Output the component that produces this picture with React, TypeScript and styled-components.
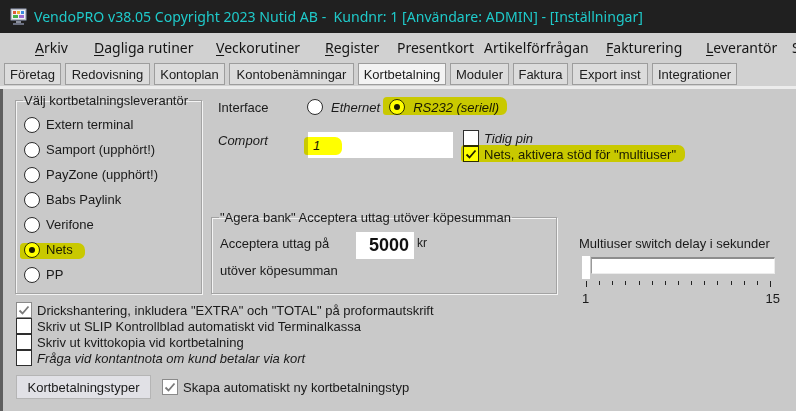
import React from 'react';
import styled, { createGlobalStyle } from 'styled-components';

const GlobalStyle = createGlobalStyle`
  html, body {
    margin: 0;
    padding: 0;
    background: #c9c9c9;
  }
  body {
    width: 796px;
    height: 411px;
    overflow: hidden;
    font-family: "Liberation Sans", Arial, sans-serif;
    font-size: 13px;
    color: #1a1a1a;
  }
`;

const HILITE = '#ffff00';

const Window = styled.div`
  width: 796px;
  height: 411px;
  display: flex;
  flex-direction: column;
  overflow: hidden;
  background: #c9c9c9;
`;

const TitleBar = styled.div`
  flex: none;
  height: 33px;
  background: #202020;
  display: flex;
  align-items: center;
  padding-left: 10px;
  gap: 7px;
  white-space: nowrap;
`;

const TitleText = styled.span`
  font-family: "Noto Sans", "Open Sans", sans-serif;
  font-size: 14.1px;
  color: #1fcaca;
`;

const MenuBar = styled.div`
  flex: none;
  height: 29px;
  background: #d1d1d1;
  display: flex;
  align-items: center;
  padding-left: 35px;
  white-space: nowrap;
  overflow: hidden;
`;

const MenuItem = styled.div<{ $w: number }>`
  flex: none;
  width: ${p => p.$w}px;
  font-family: "Noto Sans", "Open Sans", sans-serif;
  font-size: 14px;
  color: #151515;

  u {
    text-decoration: underline;
    text-underline-offset: 2px;
  }
`;

const TabStrip = styled.div`
  flex: none;
  height: 24px;
  box-sizing: border-box;
  padding: 1px 0 0 4px;
  display: flex;
  gap: 4px;
  background: #d1d1d1;
`;

const Tab = styled.div<{ $w: number; $active?: boolean }>`
  flex: none;
  width: ${p => p.$w}px;
  height: 22px;
  box-sizing: border-box;
  border: 1px solid #9d9d9d;
  background: ${p => (p.$active ? '#f3f3f3' : '#dcdcdc')};
  display: flex;
  align-items: center;
  justify-content: center;
  font-size: 13px;
  color: #202020;
  white-space: nowrap;
`;

const TabRule = styled.div`
  flex: none;
  height: 3px;
  background: #ececec;
`;

const Content = styled.div`
  flex: 1;
  border-left: 3px solid #5e5e5e;
  padding: 4px 0 0 12px;
  display: flex;
  flex-direction: column;
`;

const TopSection = styled.div`
  display: flex;
  height: 201px;
`;

const GroupBox = styled.fieldset<{ $w: number; $h: number }>`
  margin: 0;
  width: ${p => p.$w}px;
  height: ${p => p.$h}px;
  box-sizing: border-box;
  border: 1px solid #a3a3a3;
  box-shadow: inset 1px 1px 0 #f4f4f4, 1px 1px 0 #f4f4f4;
  padding: 0 6px 0 8px;
  min-inline-size: 0;
`;

const Legend = styled.legend`
  padding: 0 1px;
  margin-left: -1px;
  font-size: 13px;
  line-height: 15px;
  color: #1a1a1a;
  white-space: nowrap;
`;

const RadioList = styled.div`
  display: flex;
  flex-direction: column;
  padding-top: 4px;
`;

const RadioRow = styled.label`
  position: relative;
  height: 25px;
  display: flex;
  align-items: center;
  gap: 6px;
  white-space: nowrap;
`;

const RadioCircle = styled.span<{ $on?: boolean }>`
  flex: none;
  width: 16px;
  height: 16px;
  box-sizing: border-box;
  border-radius: 50%;
  border: 1.5px solid #2c2c2c;
  background: #fff;
  display: flex;
  align-items: center;
  justify-content: center;

  &::after {
    content: '';
    display: ${p => (p.$on ? 'block' : 'none')};
    width: 6px;
    height: 6px;
    border-radius: 50%;
    background: #1a1a1a;
  }
`;

const Highlight = styled.span<{ $l: number; $t: number; $w: number; $h: number }>`
  position: absolute;
  left: ${p => p.$l}px;
  top: ${p => p.$t}px;
  width: ${p => p.$w}px;
  height: ${p => p.$h}px;
  background: ${HILITE};
  mix-blend-mode: multiply;
  border-radius: 4px 7px 6px 3px;
  pointer-events: none;
`;

const RightColumn = styled.div`
  flex: 1;
  margin-left: 9px;
  display: flex;
  flex-direction: column;
`;

const InterfaceRow = styled.div`
  margin-top: 5px;
  height: 18px;
  padding-left: 7px;
  display: flex;
  align-items: center;
`;

const FieldLabel = styled.span<{ $w: number; $italic?: boolean }>`
  flex: none;
  width: ${p => p.$w}px;
  font-style: ${p => (p.$italic ? 'italic' : 'normal')};
  white-space: nowrap;
`;

const Option = styled.label`
  position: relative;
  display: flex;
  align-items: center;
  gap: 8px;
  margin-right: 9px;
  font-style: italic;
  white-space: nowrap;
`;

const ComportRow = styled.div`
  margin-top: 13px;
  padding-left: 7px;
  display: flex;
  align-items: flex-start;
`;

const ComportLabel = styled(FieldLabel)`
  padding-top: 4px;
`;

const TextInput = styled.div`
  position: relative;
  flex: none;
  margin-top: 3px;
  width: 145px;
  height: 26px;
  background: #fff;
  display: flex;
  align-items: center;
  padding-left: 5px;
  box-sizing: border-box;
  font-style: italic;
`;

const CheckStack = styled.div`
  margin-left: 10px;
  margin-top: 1px;
  display: flex;
  flex-direction: column;
`;

const CheckRow = styled.label<{ $italic?: boolean }>`
  position: relative;
  height: 16px;
  display: flex;
  align-items: center;
  gap: 5px;
  font-style: ${p => (p.$italic ? 'italic' : 'normal')};
  white-space: nowrap;
`;

const Box = styled.span<{ $dim?: boolean }>`
  flex: none;
  width: 16px;
  height: 16px;
  box-sizing: border-box;
  border: 1.5px solid ${p => (p.$dim ? '#8a8a8a' : '#2e2e2e')};
  background: #fff;
  display: flex;
  align-items: center;
  justify-content: center;
`;

const BottomRow = styled.div`
  margin-top: auto;
  display: flex;
  align-items: flex-start;
`;

const BankBody = styled.div`
  padding-top: 7px;
  display: flex;
  flex-direction: column;
`;

const BankLine = styled.div`
  display: flex;
  align-items: flex-start;
  height: 27px;
`;

const BankLabel = styled.span<{ $w?: number }>`
  flex: none;
  width: ${p => (p.$w ? `${p.$w}px` : 'auto')};
  padding-top: 4px;
  white-space: nowrap;
`;

const AmountInput = styled.div`
  flex: none;
  width: 58px;
  height: 27px;
  box-sizing: border-box;
  background: #fff;
  display: flex;
  align-items: center;
  justify-content: flex-end;
  padding-right: 5px;
  font-size: 18px;
  font-weight: bold;
  color: #111;
`;

const Unit = styled.span`
  margin-left: 3px;
  margin-top: 4px;
  font-size: 12px;
`;

const SliderBlock = styled.div`
  margin-left: 22px;
  margin-top: 26px;
  margin-bottom: -12px;
  width: 202px;
  display: flex;
  flex-direction: column;
`;

const SliderCaption = styled.span`
  white-space: nowrap;
  line-height: 15px;
`;

const SliderTrack = styled.div`
  position: relative;
  margin: 6px 0 0 12px;
  width: 184px;
  height: 17px;
  box-sizing: border-box;
  background: #fff;
  border-top: 2px solid #8d8d8d;
  border-left: 1px solid #9a9a9a;
  border-right: 1px solid #ececec;
  border-bottom: 1px solid #ececec;
`;

const Thumb = styled.span`
  position: absolute;
  left: -10px;
  top: -3px;
  width: 8px;
  height: 23px;
  background: #fff;
`;

const Ticks = styled.div`
  margin: 7px 0 0 7px;
  width: 185px;
  display: flex;
  justify-content: space-between;
  align-items: flex-start;
`;

const Tick = styled.span<{ $long?: boolean }>`
  width: 1px;
  height: ${p => (p.$long ? 6 : 4)}px;
  background: #222;
`;

const TickLabels = styled.div`
  margin: 4px 0 0 3px;
  width: 198px;
  display: flex;
  justify-content: space-between;
  font-size: 13px;
  line-height: 15px;
`;

const OptionList = styled.div`
  margin-top: 8px;
  margin-left: 1px;
  display: flex;
  flex-direction: column;
`;

const FooterRow = styled.div`
  margin-top: 9px;
  margin-left: 1px;
  display: flex;
  align-items: center;
  gap: 11px;
`;

const Button = styled.button`
  width: 135px;
  height: 24px;
  box-sizing: border-box;
  border: 1px solid #b5b5b5;
  background: #e1e1e6;
  font-family: "Liberation Sans", Arial, sans-serif;
  font-size: 13px;
  color: #1a1a1a;
  padding: 0;
`;

function Check({ dim }: { dim?: boolean }) {
  return (
    <svg width="12" height="11" viewBox="0 0 12 11">
      <polyline
        points="1.5,5.5 4.5,8.5 10.5,1.5"
        fill="none"
        stroke={dim ? '#7a7a7a' : '#1e1e1e'}
        strokeWidth="1.8"
      />
    </svg>
  );
}

function CheckBox({
  label,
  checked,
  dim,
  italic,
  children,
}: {
  label: string;
  checked?: boolean;
  dim?: boolean;
  italic?: boolean;
  children?: React.ReactNode;
}) {
  return (
    <CheckRow $italic={italic}>
      <Box $dim={dim}>{checked && <Check dim={dim} />}</Box>
      {label}
      {children}
    </CheckRow>
  );
}

function AppIcon() {
  return (
    <svg width="17" height="17" viewBox="0 0 17 17">
      <rect x="0.5" y="0.5" width="16" height="12" rx="1" fill="#b9bcc4" stroke="#5b6070" />
      <rect x="2" y="2" width="13" height="9" fill="#eef2f8" />
      <rect x="3" y="3" width="3" height="3" fill="#e05a3a" />
      <rect x="7" y="3" width="3" height="3" fill="#f0b030" />
      <rect x="11" y="3" width="3" height="3" fill="#3a8ae0" />
      <rect x="3" y="7" width="5" height="3" fill="#46b04a" />
      <rect x="9" y="7" width="5" height="3" fill="#9a6ad0" />
      <rect x="6" y="13" width="5" height="2" fill="#8a8f9c" />
      <rect x="3" y="15" width="11" height="2" fill="#6b7080" />
    </svg>
  );
}

const menus: { label: string; u?: boolean; w: number }[] = [
  { label: 'Arkiv', u: true, w: 59 },
  { label: 'Dagliga rutiner', u: true, w: 122 },
  { label: 'Veckorutiner', u: true, w: 109 },
  { label: 'Register', u: true, w: 72 },
  { label: 'Presentkort', w: 87 },
  { label: 'Artikelförfrågan', w: 122 },
  { label: 'Fakturering', u: true, w: 100 },
  { label: 'Leverantör', u: true, w: 86 },
  { label: 'S', w: 20 },
];

const tabs: { label: string; w: number; active?: boolean }[] = [
  { label: 'Företag', w: 57 },
  { label: 'Redovisning', w: 85 },
  { label: 'Kontoplan', w: 71 },
  { label: 'Kontobenämningar', w: 125 },
  { label: 'Kortbetalning', w: 88, active: true },
  { label: 'Moduler', w: 59 },
  { label: 'Faktura', w: 55 },
  { label: 'Export inst', w: 76 },
  { label: 'Integrationer', w: 85 },
];

const providers = [
  'Extern terminal',
  'Samport (upphört!)',
  'PayZone (upphört!)',
  'Babs Paylink',
  'Verifone',
  'Nets',
  'PP',
];

export default function App(): JSX.Element {
  return (
    <Window>
      <GlobalStyle />
      <TitleBar>
        <AppIcon />
        <TitleText>
          VendoPRO v38.05 Copyright 2023 Nutid AB -&nbsp; Kundnr: 1 [Användare: ADMIN] - [Inställningar]
        </TitleText>
      </TitleBar>

      <MenuBar>
        {menus.map(m => (
          <MenuItem key={m.label} $w={m.w}>
            {m.u ? (
              <>
                <u>{m.label[0]}</u>
                {m.label.slice(1)}
              </>
            ) : (
              m.label
            )}
          </MenuItem>
        ))}
      </MenuBar>

      <TabStrip>
        {tabs.map(t => (
          <Tab key={t.label} $w={t.w} $active={t.active}>
            {t.label}
          </Tab>
        ))}
      </TabStrip>
      <TabRule />

      <Content>
        <TopSection>
          <GroupBox $w={187} $h={201}>
            <Legend>Välj kortbetalningsleverantör</Legend>
            <RadioList>
              {providers.map(p => (
                <RadioRow key={p}>
                  {p === 'Nets' && <Highlight $l={-4} $t={6} $w={65} $h={16} />}
                  <RadioCircle $on={p === 'Nets'} />
                  {p}
                </RadioRow>
              ))}
            </RadioList>
          </GroupBox>

          <RightColumn>
            <InterfaceRow>
              <FieldLabel $w={89}>Interface</FieldLabel>
              <Option>
                <RadioCircle />
                Ethernet
              </Option>
              <Option>
                <Highlight $l={-6} $t={-2} $w={124} $h={18} />
                <RadioCircle $on />
                RS232 (seriell)
              </Option>
            </InterfaceRow>

            <ComportRow>
              <ComportLabel $w={90} $italic>
                Comport
              </ComportLabel>
              <TextInput>
                <Highlight $l={-4} $t={5} $w={38} $h={18} />1
              </TextInput>
              <CheckStack>
                <CheckBox label="Tidig pin" italic />
                <CheckBox label={'Nets, aktivera stöd för "multiuser"'} checked>
                  <Highlight $l={-2} $t={-1} $w={224} $h={17} />
                </CheckBox>
              </CheckStack>
            </ComportRow>

            <BottomRow>
              <GroupBox $w={346} $h={84}>
                <Legend>"Agera bank" Acceptera uttag utöver köpesumman</Legend>
                <BankBody>
                  <BankLine>
                    <BankLabel $w={136}>Acceptera uttag på</BankLabel>
                    <AmountInput>5000</AmountInput>
                    <Unit>kr</Unit>
                  </BankLine>
                  <BankLabel>utöver köpesumman</BankLabel>
                </BankBody>
              </GroupBox>

              <SliderBlock>
                <SliderCaption>Multiuser switch delay i sekunder</SliderCaption>
                <SliderTrack>
                  <Thumb />
                </SliderTrack>
                <Ticks>
                  {Array.from({ length: 15 }, (_, i) => (
                    <Tick key={i} $long={i === 0 || i === 14} />
                  ))}
                </Ticks>
                <TickLabels>
                  <span>1</span>
                  <span>15</span>
                </TickLabels>
              </SliderBlock>
            </BottomRow>
          </RightColumn>
        </TopSection>

        <OptionList>
          <CheckBox
            label={'Drickshantering, inkludera "EXTRA" och "TOTAL" på proformautskrift'}
            checked
            dim
          />
          <CheckBox label="Skriv ut SLIP Kontrollblad automatiskt vid Terminalkassa" />
          <CheckBox label="Skriv ut kvittokopia vid kortbetalning" />
          <CheckBox label="Fråga vid kontantnota om kund betalar via kort" italic />
        </OptionList>

        <FooterRow>
          <Button>Kortbetalningstyper</Button>
          <CheckBox label="Skapa automatiskt ny kortbetalningstyp" checked dim />
        </FooterRow>
      </Content>
    </Window>
  );
}
